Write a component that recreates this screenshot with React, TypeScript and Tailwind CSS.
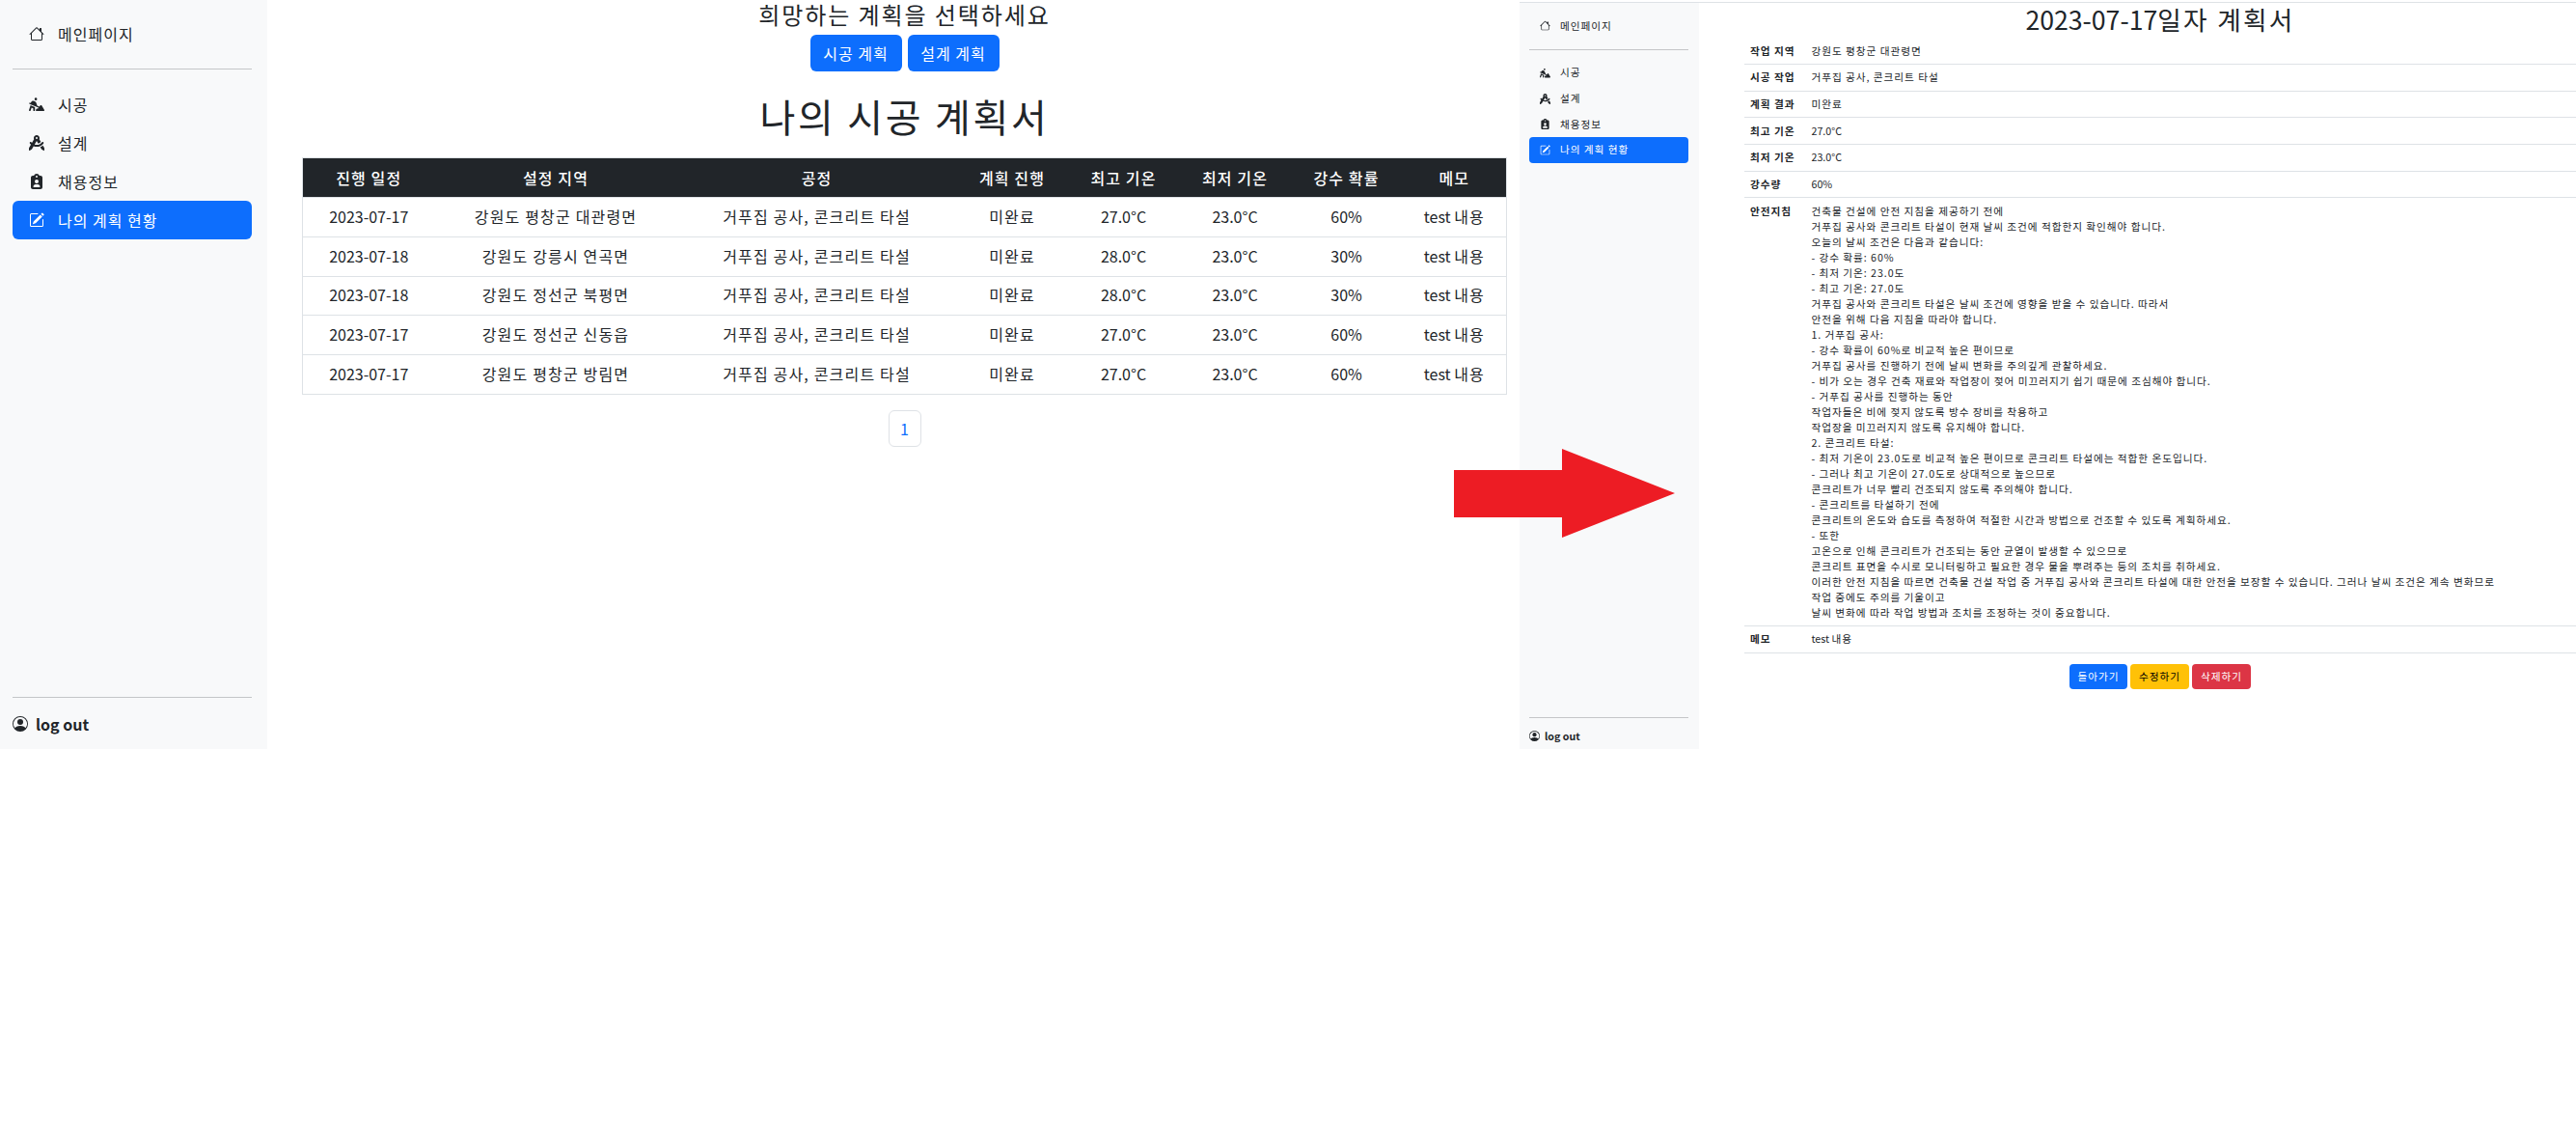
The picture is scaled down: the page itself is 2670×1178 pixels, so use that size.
import React from 'react'
import { BsHouse, BsPersonCircle, BsPencilSquare } from 'react-icons/bs'
import { FaPersonDigging, FaCompassDrafting, FaClipboardUser } from 'react-icons/fa6'

const rows = [
    ['2023-07-17', '강원도 평창군 대관령면', '27.0°C', '60%'],
    ['2023-07-18', '강원도 강릉시 연곡면', '28.0°C', '30%'],
    ['2023-07-18', '강원도 정선군 북평면', '28.0°C', '30%'],
    ['2023-07-17', '강원도 정선군 신동읍', '27.0°C', '60%'],
    ['2023-07-17', '강원도 평창군 방림면', '27.0°C', '60%'],
]

const guide = [
    '건축물 건설에 안전 지침을 제공하기 전에',
    '거푸집 공사와 콘크리트 타설이 현재 날씨 조건에 적합한지 확인해야 합니다.',
    '오늘의 날씨 조건은 다음과 같습니다:',
    '- 강수 확률: 60%',
    '- 최저 기온: 23.0도',
    '- 최고 기온: 27.0도',
    '거푸집 공사와 콘크리트 타설은 날씨 조건에 영향을 받을 수 있습니다. 따라서',
    '안전을 위해 다음 지침을 따라야 합니다.',
    '1. 거푸집 공사:',
    '- 강수 확률이 60%로 비교적 높은 편이므로',
    '거푸집 공사를 진행하기 전에 날씨 변화를 주의깊게 관찰하세요.',
    '- 비가 오는 경우 건축 재료와 작업장이 젖어 미끄러지기 쉽기 때문에 조심해야 합니다.',
    '- 거푸집 공사를 진행하는 동안',
    '작업자들은 비에 젖지 않도록 방수 장비를 착용하고',
    '작업장을 미끄러지지 않도록 유지해야 합니다.',
    '2. 콘크리트 타설:',
    '- 최저 기온이 23.0도로 비교적 높은 편이므로 콘크리트 타설에는 적합한 온도입니다.',
    '- 그러나 최고 기온이 27.0도로 상대적으로 높으므로',
    '콘크리트가 너무 빨리 건조되지 않도록 주의해야 합니다.',
    '- 콘크리트를 타설하기 전에',
    '콘크리트의 온도와 습도를 측정하여 적절한 시간과 방법으로 건조할 수 있도록 계획하세요.',
    '- 또한',
    '고온으로 인해 콘크리트가 건조되는 동안 균열이 발생할 수 있으므로',
    '콘크리트 표면을 수시로 모니터링하고 필요한 경우 물을 뿌려주는 등의 조치를 취하세요.',
    '이러한 안전 지침을 따르면 건축물 건설 작업 중 거푸집 공사와 콘크리트 타설에 대한 안전을 보장할 수 있습니다. 그러나 날씨 조건은 계속 변화므로',
    '작업 중에도 주의를 기울이고',
    '날씨 변화에 따라 작업 방법과 조치를 조정하는 것이 중요합니다.',
]

const details = [
    ['작업 지역', '강원도 평창군 대관령면', 'tracking-[0.95px]'],
    ['시공 작업', '거푸집 공사, 콘크리트 타설', 'tracking-[0.95px]'],
    ['계획 결과', '미완료', 'tracking-[0.95px]'],
    ['최고 기온', '27.0°C', ''],
    ['최저 기온', '23.0°C', ''],
    ['강수량', '60%', ''],
]

function Sidebar() {
    return (
        <div className="flex h-[776px] w-[277px] shrink-0 flex-col bg-[#f8f9fa] pl-[13px] pr-[16px] text-[16px] text-[#212529]">
            <div className="mt-[15px] flex h-10 items-center gap-[14px] px-[17px] tracking-[1px]">
                <BsHouse className="h-4 w-4" />
                <span>메인페이지</span>
            </div>
            <hr className="mt-[16px] border-[#c4c6c8]" />
            <div className="mt-[16px] flex h-10 items-center gap-[14px] px-[17px] tracking-[1px]">
                <FaPersonDigging className="h-4 w-4" />
                <span>시공</span>
            </div>
            <div className="flex h-10 items-center gap-[14px] px-[17px] tracking-[1px]">
                <FaCompassDrafting className="h-4 w-4" />
                <span>설계</span>
            </div>
            <div className="flex h-10 items-center gap-[14px] px-[17px] tracking-[1px]">
                <FaClipboardUser className="h-4 w-4" />
                <span>채용정보</span>
            </div>
            <div className="flex h-10 items-center gap-[14px] rounded-md bg-[#0d6efd] px-[17px] tracking-[1px] text-white">
                <BsPencilSquare className="h-4 w-4" />
                <span>나의 계획 현황</span>
            </div>
            <hr className="mt-auto border-[#c4c6c8]" />
            <div className="flex h-[53px] items-center gap-2 font-bold">
                <BsPersonCircle className="h-4 w-4" />
                <span>log out</span>
            </div>
        </div>
    )
}

function SmallSidebar() {
    return (
        <div className="flex h-[773px] w-[186px] shrink-0 flex-col bg-[#f8f9fa] pl-[10px] pr-[11px] text-[10.67px] text-[#212529]">
            <div className="mt-[10.5px] flex h-[26.67px] items-center gap-[10px] px-[11px] tracking-[0.95px]">
                <BsHouse className="h-[11px] w-[11px]" />
                <span>메인페이지</span>
            </div>
            <hr className="mt-[10.5px] border-[#c4c6c8]" />
            <div className="mt-[10.5px] flex h-[26.67px] items-center gap-[10px] px-[11px] tracking-[0.95px]">
                <FaPersonDigging className="h-[11px] w-[11px]" />
                <span>시공</span>
            </div>
            <div className="flex h-[26.67px] items-center gap-[10px] px-[11px] tracking-[0.95px]">
                <FaCompassDrafting className="h-[11px] w-[11px]" />
                <span>설계</span>
            </div>
            <div className="flex h-[26.67px] items-center gap-[10px] px-[11px] tracking-[0.95px]">
                <FaClipboardUser className="h-[11px] w-[11px]" />
                <span>채용정보</span>
            </div>
            <div className="flex h-[26.67px] items-center gap-[10px] rounded bg-[#0d6efd] px-[11px] tracking-[0.95px] text-white">
                <BsPencilSquare className="h-[11px] w-[11px]" />
                <span>나의 계획 현황</span>
            </div>
            <hr className="mt-auto border-[#c4c6c8]" />
            <div className="flex h-[32px] items-center gap-[5px] pt-[5px] font-bold">
                <BsPersonCircle className="h-[11px] w-[11px]" />
                <span>log out</span>
            </div>
        </div>
    )
}

function PlanTable() {
    return (
        <table className="w-[1249px] table-fixed border border-[#dee2e6] text-center text-[16px] text-[#212529]">
            <thead>
                <tr className="h-[41px] bg-[#212529] tracking-[1.1px] text-white">
                    <th className="w-[137px] font-medium">진행 일정</th>
                    <th className="w-[251px] font-medium">설정 지역</th>
                    <th className="w-[290px] font-medium">공정</th>
                    <th className="w-[115px] font-medium">계획 진행</th>
                    <th className="w-[116px] font-medium">최고 기온</th>
                    <th className="w-[115px] font-medium">최저 기온</th>
                    <th className="w-[116px] font-medium">강수 확률</th>
                    <th className="font-medium">메모</th>
                </tr>
            </thead>
            <tbody>
                {rows.map((r, i) => (
                    <tr key={i} className="h-[40.8px] border-t border-[#dee2e6]">
                        <td className="pb-[2px]">{r[0]}</td>
                        <td className="pb-[2px] tracking-[1.17px]">{r[1]}</td>
                        <td className="pb-[2px] tracking-[1.17px]">거푸집 공사, 콘크리트 타설</td>
                        <td className="pb-[2px] tracking-[1.17px]">미완료</td>
                        <td className="pb-[2px]">{r[2]}</td>
                        <td className="pb-[2px]">23.0°C</td>
                        <td className="pb-[2px]">{r[3]}</td>
                        <td className="pb-[2px]">test <span className="tracking-[1px]">내용</span></td>
                    </tr>
                ))}
            </tbody>
        </table>
    )
}

export default function App() {
    return (
        <div className="relative flex h-[1178px] w-[2670px] overflow-hidden bg-white font-['Noto_Sans_CJK_KR',sans-serif]">
            {/* left capture */}
            <div className="flex w-[1575px] shrink-0">
                <Sidebar />
                <div className="flex w-[1298px] flex-col items-center pl-[23px]">
                    <div className="h-[29px] text-[24px] leading-[29px] tracking-[1.9px] text-[#212529]">희망하는 계획을 선택하세요</div>
                    <div className="mt-[7px] flex gap-[6px]">
                        <button className="h-[38px] w-[95px] rounded-md bg-[#0d6efd] text-[16px] tracking-[1px] text-white">시공 계획</button>
                        <button className="h-[38px] w-[95px] rounded-md bg-[#0d6efd] text-[16px] tracking-[1px] text-white">설계 계획</button>
                    </div>
                    <h1 className="mt-[22px] h-[48px] text-[40px] leading-[48px] font-normal tracking-[2.7px] text-[#212529]">나의 시공 계획서</h1>
                    <div className="mt-[19px]">
                        <PlanTable />
                    </div>
                    <div className="mt-[16px] flex h-[38px] w-[34px] items-center justify-center rounded-md border border-[#dee2e6] text-[16px] text-[#0d6efd]">1</div>
                </div>
            </div>

            {/* right capture */}
            <div className="flex h-[776px] flex-1 flex-col">
                <div className="mt-[1px] h-[2px] border-b border-[#dee2e6]" />
                <div className="flex">
                    <SmallSidebar />
                    <div className="flex flex-1 flex-col pl-[47px] text-[10.67px] leading-[16px] text-[#212529]">
                        <h2 className="mt-[1px] h-[32px] text-center text-[26.67px] leading-[32px] font-normal">
                            2023-07-17<span className="tracking-[2.3px]">일자 계획서</span>
                        </h2>
                        <div className="mt-[3.5px]">
                            {details.map((d) => (
                                <div key={d[0]} className="flex h-[27.67px] items-center border-b border-[#dee2e6]">
                                    <div className="w-[69.5px] pl-[6px] font-bold tracking-[0.95px]">{d[0]}</div>
                                    <div className={d[2]}>{d[1]}</div>
                                </div>
                            ))}
                            <div className="flex border-b border-[#dee2e6] py-[5.33px]">
                                <div className="w-[69.5px] shrink-0 pl-[6px] font-bold tracking-[0.95px]">안전지침</div>
                                <div className="tracking-[0.95px]">
                                    {guide.map((line, i) => (
                                        <div key={i}>{line}</div>
                                    ))}
                                </div>
                            </div>
                            <div className="flex h-[27.67px] items-center border-b border-[#dee2e6]">
                                <div className="w-[69.5px] pl-[6px] font-bold tracking-[0.95px]">메모</div>
                                <div>test <span className="tracking-[0.95px]">내용</span></div>
                            </div>
                        </div>
                        <div className="mt-[11px] flex justify-center gap-[3px] tracking-[0.95px]">
                            <button className="h-[26px] w-[60px] rounded bg-[#0d6efd] text-white">돌아가기</button>
                            <button className="h-[26px] w-[61px] rounded bg-[#ffc107] text-black">수정하기</button>
                            <button className="h-[26px] w-[61px] rounded bg-[#dc3545] text-white">삭제하기</button>
                        </div>
                    </div>
                </div>
            </div>

            {/* red arrow pasted between the captures */}
            <svg className="absolute left-[1507px] top-[465px]" width="229" height="92" viewBox="0 0 229 92">
                <polygon points="0,22 112,22 112,0 229,46 112,92 112,71 0,71" fill="#ed1c24" />
            </svg>
        </div>
    )
}
